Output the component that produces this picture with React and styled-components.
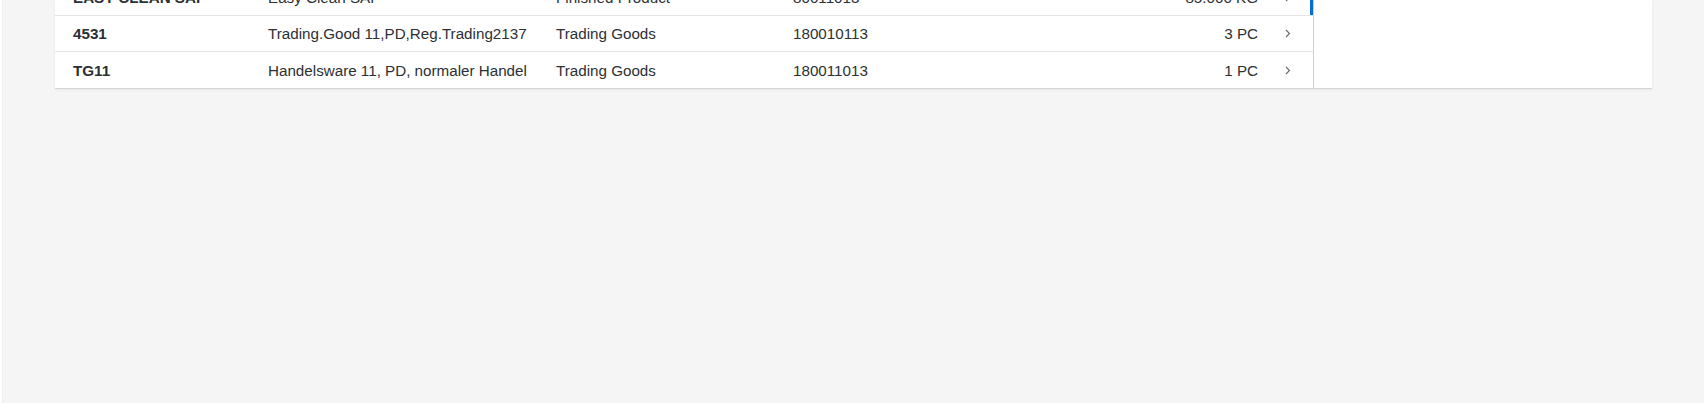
import React from "react";
import styled, { createGlobalStyle } from "styled-components";

const produtos = [
    { material: "EASY CLEAN SAP", descricao: "Easy Clean SAP", tipo: "Finished Product", numero: "80011013", quantidade: "85.000 KG", navegado: true },
    { material: "4531", descricao: "Trading.Good 11,PD,Reg.Trading2137", tipo: "Trading Goods", numero: "180010113", quantidade: "3 PC" },
    { material: "TG11", descricao: "Handelsware 11, PD, normaler Handel", tipo: "Trading Goods", numero: "180011013", quantidade: "1 PC" },
];

export default function App() {
    return (
        <>
            <GlobalStyle />
            <Pagina>
                <Painel>
                    <Tabela>
                        {produtos.map((p, i) => (
                            <Linha key={i}>
                                <Celula negrito primeira>{p.material}</Celula>
                                <Celula>{p.descricao}</Celula>
                                <Celula>{p.tipo}</Celula>
                                <Celula>{p.numero}</Celula>
                                <Celula direita>{p.quantidade}</Celula>
                                <CelulaSeta>
                                    <svg width="6" height="9" viewBox="0 0 6 9">
                                        <polyline points="1,1 4.5,4.5 1,8" fill="none" stroke="#6a6d70" strokeWidth="1.2" />
                                    </svg>
                                </CelulaSeta>
                                <Indicador ativo={p.navegado} />
                            </Linha>
                        ))}
                    </Tabela>
                    <Vazio />
                </Painel>
            </Pagina>
        </>
    );
}

const GlobalStyle = createGlobalStyle`
    body {
        margin: 0;
        background-color: white;
        font-family: "Liberation Sans", Arial, sans-serif;
    }
`

const Pagina = styled.div`
    height: 403px;
    margin: 0 2px 4px 2px;
    padding: 0 52px;
    background-color: #f5f5f5;
    border-left: 1px solid #efefef;
    box-sizing: border-box;
`

const Painel = styled.div`
    display: flex;
    height: 88px;
    overflow: hidden;
    background-color: white;
    box-shadow: 0 1px 0 #d5d5d5, 0 2px 3px rgba(0, 0, 0, 0.06);
`

const Tabela = styled.div`
    width: 1259px;
    flex-shrink: 0;
    margin-top: -20px;
    border-right: 1px solid #cfcfcf;
    box-sizing: border-box;
`

const Linha = styled.div`
    display: grid;
    grid-template-columns: 197px 288px 237px 301px 196px 36px 3px;
    height: 36px;
    align-items: center;
    border-bottom: 1px solid #e5e5e5;
    box-sizing: border-box;
    &:last-child {
        border-bottom: none;
    }
`

const Celula = styled.div`
    padding: ${(props) => (props.primeira ? "0 16px 0 18px" : "0 16px")};
    font-size: 15.2px;
    color: #2c3034;
    font-weight: ${(props) => (props.negrito ? "bold" : "normal")};
    text-align: ${(props) => (props.direita ? "right" : "left")};
    white-space: nowrap;
    overflow: hidden;
`

const CelulaSeta = styled.div`
    display: flex;
    align-items: center;
    padding-left: 11px;
    height: 100%;
`

const Indicador = styled.div`
    height: 100%;
    background-color: ${(props) => (props.ativo ? "#0a6ed1" : "transparent")};
`

const Vazio = styled.div`
    flex: 1;
`
